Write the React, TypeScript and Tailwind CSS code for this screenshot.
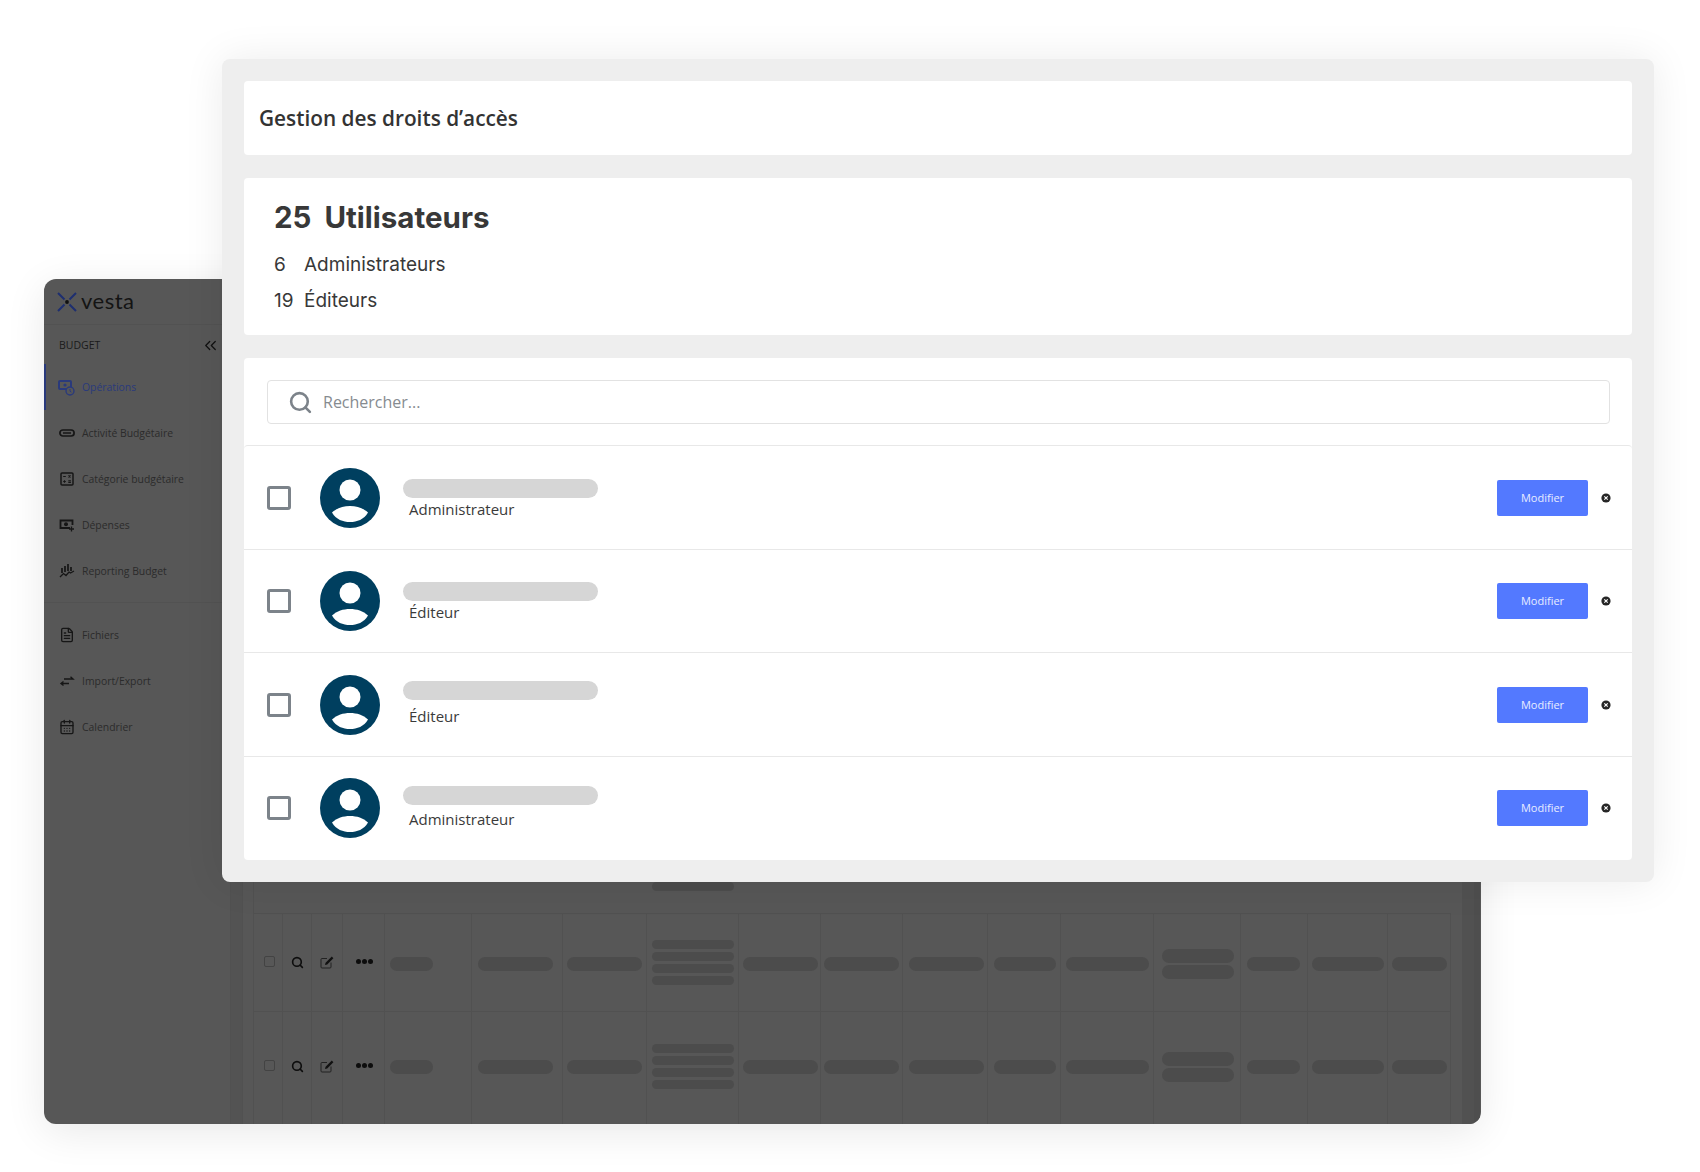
import React from "react";
import { Search, ChevronsLeft, FileText, CalendarDays } from "lucide-react";

const openSans = "font-['Open_Sans','Noto_Sans',sans-serif]";
const inter = "font-['Inter','Liberation_Sans',sans-serif]";

const IconOperations = () => (
  <svg width="17" height="17" viewBox="0 0 17 17" fill="none" className="text-[#2a3a7c]">
    <rect x="1" y="2" width="12" height="8" rx="1" stroke="currentColor" strokeWidth="2" />
    <circle cx="7" cy="6" r="1.6" fill="currentColor" />
    <circle cx="12" cy="12" r="4" fill="#575757" stroke="currentColor" strokeWidth="1.4" />
    <path d="M12 10v2.2l1.4 1" stroke="currentColor" strokeWidth="1" />
  </svg>
);

const IconActivity = () => (
  <svg width="16" height="16" viewBox="0 0 16 16" fill="none">
    <rect x="0.9" y="5" width="14.2" height="6" rx="3" stroke="#161616" strokeWidth="1.7" />
    <path d="M4 8h8" stroke="#161616" strokeWidth="1.4" />
  </svg>
);

const IconCalc = () => (
  <svg width="16" height="16" viewBox="0 0 16 16" fill="none">
    <rect x="2" y="2" width="12" height="12" rx="1" stroke="#161616" strokeWidth="1.5" />
    <path d="M4.200 5.500h2.600M9.500 4.300l2 2.200M11.500 4.300l-2 2.200M4.200 10.500h2.600M5.500 9.200v2.600M9.300 9.700h2.600M9.300 11.400h2.600" stroke="#161616" strokeWidth="1.1" />
  </svg>
);

const IconDepenses = () => (
  <svg width="16" height="16" viewBox="0 0 16 16" fill="none">
    <path d="M11 11H1.500V3.500h12V8" stroke="#161616" strokeWidth="1.800" />
    <circle cx="7" cy="7.200" r="2" fill="#161616" />
    <path d="M12.500 9.500v5M10 12h5" stroke="#161616" strokeWidth="1.300" />
  </svg>
);

const IconReporting = () => (
  <svg width="16" height="16" viewBox="0 0 16 16" fill="none">
    <path d="M3 5v5M6 3v6M9 1v7M12 4v4" stroke="#161616" strokeWidth="1.700" />
    <path d="M1 14l3.500-3.500 2.500 2 3-3.500 1.500 1L15 8" stroke="#161616" strokeWidth="1.300" />
  </svg>
);

const IconImport = () => (
  <svg width="16" height="16" viewBox="0 0 16 16" fill="none">
    <path d="M5 6h9M11.500 3.800L14 6H11.500M2 10.500h8M4.500 8.500L2 10.500l2.500 2" stroke="#161616" strokeWidth="1.400" />
  </svg>
);

const budgetItems = [
  { label: "Activité Budgétaire", icon: <IconActivity /> },
  { label: "Catégorie budgétaire", icon: <IconCalc /> },
  { label: "Dépenses", icon: <IconDepenses /> },
  { label: "Reporting Budget", icon: <IconReporting /> },
];

const otherItems = [
  { label: "Fichiers", icon: <FileText size={16} strokeWidth={2} color="#161616" /> },
  { label: "Import/Export", icon: <IconImport /> },
  { label: "Calendrier", icon: <CalendarDays size={16} strokeWidth={2} color="#161616" /> },
];

const NavItem = ({ label, icon }: { label: string; icon: React.ReactNode }) => (
  <div className="h-[46px] flex items-center pl-[14px] gap-[7px]">
    <span className="w-[17px] flex justify-center">{icon}</span>
    <span className="text-[10.4px] text-[#2b2b2b] pt-[2px]">{label}</span>
  </div>
);

const Sidebar = () => (
  <div className={`w-[187px] shrink-0 border-r border-[#515151] ${openSans}`}>
    <div className="h-[46px] flex items-center pl-[13px] gap-[4px] border-b border-[#525252]">
      <svg width="20" height="20" viewBox="0 0 20 20" fill="none">
        <path d="M1 1l6.500 6.500M19 1l-6.500 6.500M1 19l6.500-6.500M19 19l-6.500-6.500" stroke="#1e2f70" strokeWidth="2" />
        <circle cx="10" cy="10" r="1.900" fill="#111" />
      </svg>
      <span className="text-[22px] leading-none text-[#141414] font-['Lato',sans-serif] tracking-[0.5px] pb-[2px]">vesta</span>
    </div>
    <div className="h-[39px] flex items-center justify-between pl-[15px] pr-[10px] pt-[2px]">
      <span className="text-[10.5px] text-[#1a1a1a]">BUDGET</span>
      <ChevronsLeft size={19} strokeWidth={1.6} color="#111111" />
    </div>
    <div className="h-[46px] flex items-center pl-[12px] gap-[7px] border-l-2 border-[#2a3a7c]">
      <span className="w-[17px] flex justify-center"><IconOperations /></span>
      <span className="text-[10.4px] text-[#2a3a7c] pt-[2px]">Opérations</span>
    </div>
    {budgetItems.map((item) => (
      <NavItem key={item.label} label={item.label} icon={item.icon} />
    ))}
    <div className="mt-[8px] mb-[9px] border-t border-[#525252]" />
    {otherItems.map((item) => (
      <NavItem key={item.label} label={item.label} icon={item.icon} />
    ))}
  </div>
);

const pillCols = [
  { pad: "pl-[5px]", w: "w-[43px]", kind: "pill" },
  { pad: "pl-[6px]", w: "w-[75px]", kind: "pill" },
  { pad: "pl-[4px]", w: "w-[75px]", kind: "pill" },
  { pad: "pl-[5px]", w: "w-[82px]", kind: "multi" },
  { pad: "pl-[4px]", w: "w-[75px]", kind: "pill" },
  { pad: "pl-[3px]", w: "w-[75px]", kind: "pill" },
  { pad: "pl-[6px]", w: "w-[75px]", kind: "pill" },
  { pad: "pl-[6px]", w: "w-[62px]", kind: "pill" },
  { pad: "pl-[5px]", w: "w-[83px]", kind: "pill" },
  { pad: "pl-[8px]", w: "w-[72px]", kind: "double" },
  { pad: "pl-[6px]", w: "w-[53px]", kind: "pill" },
  { pad: "pl-[4px]", w: "w-[72px]", kind: "pill" },
  { pad: "pl-[4px]", w: "w-[55px]", kind: "pill" },
];

const gridCols =
  "grid grid-cols-[29px_29px_31px_42px_87px_91px_84px_92px_82px_82px_85px_73px_93px_87px_67px_80px_63px]";
const cell = "border-r border-[#515151] h-full";

const rowB = { h: "h-[98px]", icon: "pt-[42px]", pill: "pt-[43px]", multi: "pt-[26px]", double: "pt-[35px]" };
const rowC = { h: "h-[113px]", icon: "pt-[48px]", pill: "pt-[48px]", multi: "pt-[32px]", double: "pt-[40px]" };

const TableRow = ({ row }: { row: typeof rowB }) => (
  <div className={`${gridCols} ${row.h} border-t border-[#515151]`}>
    <div className={`${cell} ${row.icon} pl-[10px]`}>
      <div className="w-[11px] h-[11px] border border-[#434343] rounded-[2px]" />
    </div>
    <div className={`${cell} ${row.icon} pl-[8px]`}>
      <Search size={13} strokeWidth={3} color="#0d0d0d" />
    </div>
    <div className={`${cell} ${row.icon} pl-[8px]`}>
      <svg width="14" height="13" viewBox="0 0 14 13" fill="none">
        <path d="M11 6.500V11a1 1 0 0 1-1 1H2a1 1 0 0 1-1-1V3.500a1 1 0 0 1 1-1h5" stroke="#222" strokeWidth="1" />
        <path d="M5 9l.6-2.200L11.800 0.600l1.600 1.600L7.200 8.400z" fill="#111" />
      </svg>
    </div>
    <div className={`${cell} ${row.icon} pl-[13px]`}>
      <div className="pt-[3px] flex gap-[1.5px]">
        <div className="w-[4.5px] h-[4.5px] rounded-full bg-[#0d0d0d]" />
        <div className="w-[4.5px] h-[4.5px] rounded-full bg-[#0d0d0d]" />
        <div className="w-[4.5px] h-[4.5px] rounded-full bg-[#0d0d0d]" />
      </div>
    </div>
    {pillCols.map((c, i) => {
      if (c.kind === "multi") {
        return (
          <div key={i} className={`${cell} ${row.multi} ${c.pad} flex flex-col gap-[3px]`}>
            <div className={`${c.w} h-[9px] rounded-full bg-[#4c4c4c]`} />
            <div className={`${c.w} h-[9px] rounded-full bg-[#4c4c4c]`} />
            <div className={`${c.w} h-[9px] rounded-full bg-[#4c4c4c]`} />
            <div className={`${c.w} h-[9px] rounded-full bg-[#4c4c4c]`} />
          </div>
        );
      }
      if (c.kind === "double") {
        return (
          <div key={i} className={`${cell} ${row.double} ${c.pad} flex flex-col gap-[2px]`}>
            <div className={`${c.w} h-[14px] rounded-full bg-[#4c4c4c]`} />
            <div className={`${c.w} h-[14px] rounded-full bg-[#4c4c4c]`} />
          </div>
        );
      }
      return (
        <div key={i} className={`${cell} ${row.pill} ${c.pad}`}>
          <div className={`${c.w} h-[14px] rounded-full bg-[#4c4c4c]`} />
        </div>
      );
    })}
  </div>
);

const BackWindow = () => (
  <div className="absolute left-[44px] top-[279px] w-[1437px] h-[845px] bg-[#575757] rounded-[12px] overflow-hidden flex shadow-[0_8px_40px_rgba(0,0,0,0.09)]">
    <Sidebar />
    <div className="w-[12px] shrink-0 bg-[#535353] border-r border-[#515151]" />
    <div className="w-[11px] shrink-0 border-r border-[#515151]" />
    <div className="w-[1197px] shrink-0">
      <div className="h-[634px] flex items-end pb-[22px] pl-[398px]">
        <div className="w-[82px] h-[9px] rounded-full bg-[#4c4c4c]" />
      </div>
      <TableRow row={rowB} />
      <TableRow row={rowC} />
    </div>
    <div className="w-[12px] shrink-0 border-r border-[#515151]" />
    <div className="w-[11px] shrink-0 bg-[#515151]" />
    <div className="w-[6px] shrink-0 bg-[#4e4e4e] rounded-b-[4px]" />
  </div>
);

const users = [
  { role: "Administrateur", pill: "mt-[32px] mb-[1px]", border: "rounded-t-[4px]" },
  { role: "Éditeur", pill: "mt-[31px] mb-[1px]", border: "" },
  { role: "Éditeur", pill: "mt-[27px] mb-[6px]", border: "" },
  { role: "Administrateur", pill: "mt-[28px] mb-[4px]", border: "" },
];

const UserRow = ({ user }: { user: (typeof users)[number] }) => (
  <div className={`h-[103.5px] border-t border-[#e8e8e8] flex items-center pl-[23px] pr-[21px] pt-[1px] ${user.border}`}>
    <div className="w-[24px] h-[24px] border-[3px] border-[#7c838a] rounded-[3px] shrink-0" />
    <svg width="60" height="60" viewBox="0 0 60 60" className="ml-[29px] shrink-0">
      <circle cx="30" cy="30" r="30" fill="#003f5f" />
      <circle cx="30" cy="22" r="10.500" fill="#ffffff" />
      <path d="M12 44.500C17 40 23 38 30 38s13 2 18 6.500C44 51.500 37 54 30 54s-14-2.500-18-9.500z" fill="#ffffff" />
    </svg>
    <div className="ml-[23px] h-full">
      <div className={`w-[195px] h-[19px] rounded-full bg-[#d6d6d6] ${user.pill}`} />
      <div className={`pl-[6px] text-[15px] leading-[20px] text-[#3a3a3a] ${openSans}`}>{user.role}</div>
    </div>
    <button className={`ml-auto w-[91px] h-[36px] rounded-[2px] bg-[#5379ff] text-[#e8edff] text-[11px] ${openSans}`}>
      Modifier
    </button>
    <svg width="10" height="10" viewBox="0 0 10 10" className="ml-[13px] shrink-0">
      <circle cx="5" cy="5" r="4.600" fill="#262626" />
      <path d="M3.300 3.300l3.400 3.400M6.700 3.300L3.300 6.700" stroke="#ffffff" strokeWidth="1.100" />
    </svg>
  </div>
);

const AccessWindow = () => (
  <div className="absolute left-[222px] top-[59px] w-[1432px] h-[823px] bg-[#eeeeee] rounded-[8px] p-[22px] flex flex-col gap-[23px] shadow-[0_0_40px_rgba(0,0,0,0.08)]">
    <div className="h-[74px] shrink-0 bg-white rounded-[4px] flex items-center pl-[15px] pt-[1px]">
      <h1 className={`text-[20.8px] font-semibold text-[#333333] ${openSans}`}>Gestion des droits d’accès</h1>
    </div>
    <div className={`h-[157px] shrink-0 bg-white rounded-[4px] pl-[30px] pt-[19px] text-[#383838] ${inter}`}>
      <div className="flex gap-[13px] text-[29.5px] leading-[40px] font-bold">
        <span>25</span>
        <span>Utilisateurs</span>
      </div>
      <div className="mt-[10px] flex text-[19px] leading-[36px]">
        <span className="w-[30px]">6</span>
        <span>Administrateurs</span>
      </div>
      <div className="flex text-[19px] leading-[35px]">
        <span className="w-[30px]">19</span>
        <span>Éditeurs</span>
      </div>
    </div>
    <div className="flex-1 bg-white rounded-[4px]">
      <div className="h-[87px] pl-[23px] pr-[22px] pt-[22px]">
        <div className="h-[44px] border border-[#e2e2e2] rounded-[4px] flex items-center pl-[20px] gap-[10px]">
          <Search size={25} strokeWidth={2.5} color="#7c838a" />
          <span className={`text-[16px] text-[#868b90] ${openSans}`}>Rechercher...</span>
        </div>
      </div>
      {users.map((u, i) => (
        <UserRow key={i} user={u} />
      ))}
    </div>
  </div>
);

export default function App() {
  return (
    <div className="relative w-[1700px] h-[1172px] bg-white overflow-hidden">
      <BackWindow />
      <AccessWindow />
    </div>
  );
}
